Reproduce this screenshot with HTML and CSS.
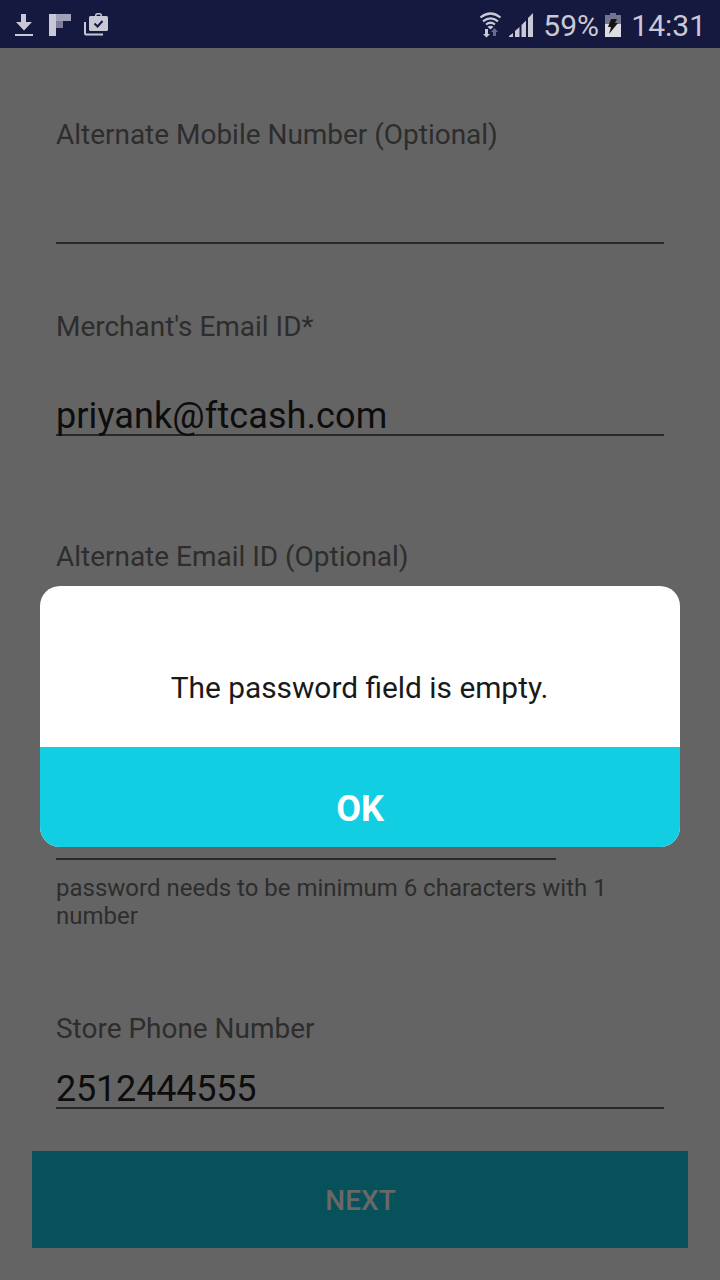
FILE: index.html
```html
<!DOCTYPE html>
<html lang="en">
<head>
<meta charset="utf-8">
<title>Merchant details</title>
<link rel="stylesheet" href="styles.css">
</head>
<body>
<div class="screen">
  <header class="status">
    <div class="notifications">
      <svg width="18" height="22" viewBox="0 0 18 22"><path d="M6 0h5v8h6L9 16.500 1 8h5zM0 20h18v2H0z" fill="#c8c8d6"/></svg>
      <svg width="22" height="22" viewBox="0 0 22 22"><path d="M0 0h7v22H0z" fill="#c8c8d6"/><path d="M7 0h15v7H7z" fill="#a1a2b8"/><path d="M7 7h7v7H7z" fill="#7d7f9b"/></svg>
      <svg width="25" height="23" viewBox="0 0 25 23"><path d="M1 9v11.500q0 1 1 1h17" fill="none" stroke="#c8c8d6" stroke-width="2"/><path d="M6.500 3H11V2.500Q11 0 13.500 0h2Q18 0 18 2.500V3h4.500Q24 3 24 4.500v12q0 1.500-1.500 1.500h-16Q5 18 5 16.500v-12Q5 3 6.500 3zM12.500 3h4V2.500q0-1-1-1h-2q-1 0-1 1z" fill="#c8c8d6" fill-rule="evenodd"/><path d="M10.500 10.500l3 3 5-5.500" fill="none" stroke="#15183f" stroke-width="2"/></svg>
    </div>
    <div class="system">
      <svg class="wifi" width="22" height="26" viewBox="0 0 22 26"><g fill="none" stroke="#c8c8d6" stroke-width="2.200"><path d="M.5 5.500q10-8 20 0M3 9.300q7.500-6 15 0M6 12.500q4.500-3.500 9 0"/></g><path d="M7.500 14.800q3-2 6 0L10.500 17.500zM5 17h3v5h2l-3.500 3.500L3 22h2z" fill="#c8c8d6"/><path d="M14.500 16l3.500 4h-2v4h-3v-4h-2z" fill="#686b8b"/></svg>
      <svg class="signal" width="24" height="24" viewBox="0 0 24 24"><path d="M0 24v-1l4-3v4zM6 24v-6l4.500-4v10zM12.500 24V12l4.500-4.500v16.500zM19 24V5l5-5v24z" fill="#c8c8d6"/></svg>
      <span class="percent">59%</span>
      <svg class="battery" width="16" height="24" viewBox="0 0 16 24"><path d="M5 0h6v2h5v9H0V2h5z" fill="#73758f"/><path d="M0 11h16v13H0z" fill="#dcdce2"/><path d="M6 6h6l-2 4h3L4 21l2-7H3z" fill="#15160f"/></svg>
      <span>14:31</span>
    </div>
  </header>
  <main class="form">
    <section class="field mobile"><div class="label">Alternate Mobile Number (Optional)</div><div class="input"></div></section>
    <section class="field email"><div class="label">Merchant's Email ID*</div><div class="input address">priyank@ftcash.com</div></section>
    <section class="field alternate"><div class="label">Alternate Email ID (Optional)</div></section>
    <section class="field password"><div class="input"></div><p class="hint">password needs to be minimum 6 characters with 1 number</p></section>
    <section class="field phone"><div class="label">Store Phone Number</div><div class="input number">2512444555</div></section>
  </main>
  <div class="next">NEXT</div>
  <div class="dialog">
    <div class="message">The password field is empty.</div>
    <div class="ok">OK</div>
  </div>
</div>
</body>
</html>
```
FILE: styles.css
```css
* { box-sizing: border-box; }
body { margin: 0; font-family: Roboto, sans-serif; }
svg { display: block; flex: none; }
.screen { position: relative; width: 720px; height: 1280px; overflow: hidden; background: #646464; }
.status { display: flex; justify-content: space-between; height: 48px; background: #15183f; color: #c8c8d6; }
.notifications { display: flex; align-items: flex-start; gap: 16px; padding: 14px 0 0 15px; }
.notifications svg:last-child { margin: -1px 0 0 -3px; }
.system { display: flex; align-items: flex-start; padding-right: 14px; font-size: 30px; line-height: 51px; }
.wifi { margin: 12px 7px 0 0; }
.signal { margin: 13px 10px 0 0; }
.percent { width: 62px; }
.battery { margin: 13px 10px 0 0; }
.form { height: 1103px; padding: 70px 56px 0; }
.field { display: flex; flex-direction: column; justify-content: space-between; }
.label { color: #2d2d2d; font-size: 28px; line-height: 34px; letter-spacing: -0.02px; white-space: nowrap; }
.input { height: 41px; border-bottom: 2px solid #282828; color: #0d0d0d; font-size: 36px; line-height: 42px; }
.address { letter-spacing: 0.1px; }
.number { letter-spacing: -0.2px; }
.mobile { height: 126px; }
.email { height: 126px; margin-top: 66px; }
.alternate { height: 32px; margin-top: 104px; }
.password { display: block; margin-top: 247px; }
.password .input { width: 500px; }
.hint { margin: 14px 0 0; color: #2d2d2d; font-size: 24px; line-height: 28px; }
.phone { height: 97px; margin-top: 82px; }
.next { display: flex; align-items: center; justify-content: center; height: 97px; margin: 0 32px; padding: 2px 0 0 1px; background: #07525a; color: #686868; font-size: 28px; font-weight: 500; }
.dialog { position: absolute; left: 40px; top: 586px; width: 640px; height: 261px; overflow: hidden; border-radius: 20px; background: #fff; }
.message { height: 161px; padding: 84px 1px 0 0; color: #191919; font-size: 29.85px; line-height: 36px; text-align: center; }
.ok { height: 100px; padding-top: 41px; background: #12cee3; color: #fff; font-size: 36px; font-weight: 700; line-height: 42px; text-align: center; }
```
